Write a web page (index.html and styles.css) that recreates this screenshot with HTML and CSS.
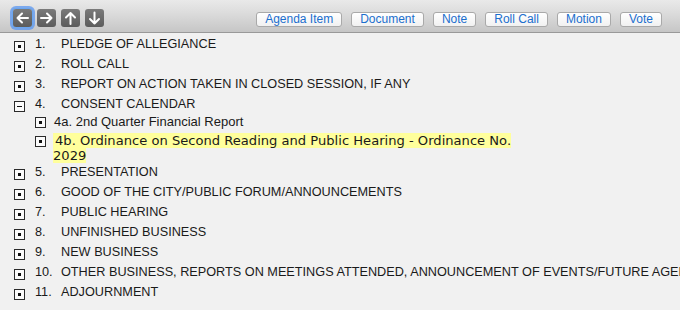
FILE: index.html
```html
<!DOCTYPE html>
<html>
<head>
<meta charset="utf-8">
<link rel="stylesheet" href="styles.css">
</head>
<body>
<div class="toolbar">
  <div class="nav">
    <button class="nav-btn focused" title="Back"><svg width="19" height="18" viewBox="0 0 19 18"><path d="M15 9H4.5M9 4.5L4.5 9L9 13.5" fill="none" stroke="#fff" stroke-width="2" stroke-linecap="round" stroke-linejoin="round"/></svg></button>
    <button class="nav-btn" title="Forward"><svg width="19" height="18" viewBox="0 0 19 18"><path d="M4 9H14.5M10 4.5L14.5 9L10 13.5" fill="none" stroke="#fff" stroke-width="2" stroke-linecap="round" stroke-linejoin="round"/></svg></button>
    <button class="nav-btn" title="Up"><svg width="19" height="18" viewBox="0 0 19 18"><path d="M9.5 15V4M5 8.5L9.5 4L14 8.5" fill="none" stroke="#fff" stroke-width="2" stroke-linecap="round" stroke-linejoin="round"/></svg></button>
    <button class="nav-btn" title="Down"><svg width="19" height="18" viewBox="0 0 19 18"><path d="M9.5 3.5V14.5M5 10L9.5 14.5L14 10" fill="none" stroke="#fff" stroke-width="2" stroke-linecap="round" stroke-linejoin="round"/></svg></button>
  </div>
  <div class="actions">
    <button class="act">Agenda Item</button>
    <button class="act">Document</button>
    <button class="act">Note</button>
    <button class="act">Roll Call</button>
    <button class="act">Motion</button>
    <button class="act">Vote</button>
  </div>
</div>
<ul class="tree">
  <li class="item"><div class="row"><span class="box plus"></span><span class="num">1.</span><span class="title">PLEDGE OF ALLEGIANCE</span></div></li>
  <li class="item"><div class="row"><span class="box plus"></span><span class="num">2.</span><span class="title">ROLL CALL</span></div></li>
  <li class="item"><div class="row"><span class="box plus"></span><span class="num">3.</span><span class="title">REPORT ON ACTION TAKEN IN CLOSED SESSION, IF ANY</span></div></li>
  <li class="item"><div class="row"><span class="box minus"></span><span class="num">4.</span><span class="title">CONSENT CALENDAR</span></div>
    <ul class="sub">
      <li class="subrow"><span class="box plus"></span><span class="subtitle">4a. 2nd Quarter Financial Report</span></li>
      <li class="subrow selected"><span class="box plus"></span><span class="subtitle mark"><span class="hl">4b. Ordinance on Second Reading and Public Hearing - Ordinance No. 2029</span></span></li>
    </ul>
  </li>
  <li class="item"><div class="row"><span class="box plus"></span><span class="num">5.</span><span class="title">PRESENTATION</span></div></li>
  <li class="item"><div class="row"><span class="box plus"></span><span class="num">6.</span><span class="title">GOOD OF THE CITY/PUBLIC FORUM/ANNOUNCEMENTS</span></div></li>
  <li class="item"><div class="row"><span class="box plus"></span><span class="num">7.</span><span class="title">PUBLIC HEARING</span></div></li>
  <li class="item"><div class="row"><span class="box plus"></span><span class="num">8.</span><span class="title">UNFINISHED BUSINESS</span></div></li>
  <li class="item"><div class="row"><span class="box plus"></span><span class="num">9.</span><span class="title">NEW BUSINESS</span></div></li>
  <li class="item"><div class="row"><span class="box plus"></span><span class="num">10.</span><span class="title">OTHER BUSINESS, REPORTS ON MEETINGS ATTENDED, ANNOUNCEMENT OF EVENTS/FUTURE AGENDA ITEMS</span></div></li>
  <li class="item"><div class="row"><span class="box plus"></span><span class="num">11.</span><span class="title">ADJOURNMENT</span></div></li>
</ul>
</body>
</html>
```

FILE: styles.css
```css
html, body {
  margin: 0;
  padding: 0;
  overflow: hidden;
  background: #f1f1f1;
  font-family: "Liberation Sans", Arial, sans-serif;
  color: #1a1a1a;
}

.toolbar {
  box-sizing: border-box;
  height: 33px;
  display: flex;
  justify-content: space-between;
  align-items: flex-start;
  padding: 9px 18px 0 13px;
  background: linear-gradient(#e9e9e9, #dcdcdc 40%, #c6c6c6);
  border-bottom: 1px solid #999;
}

.nav {
  display: flex;
  gap: 5px;
}

.nav-btn {
  width: 19px;
  height: 18px;
  padding: 0;
  border: none;
  border-radius: 3px;
  background: linear-gradient(#7a7a7a, #5c5c5c);
  display: flex;
  align-items: center;
  justify-content: center;
}

.nav-btn.focused {
  box-shadow: 0 0 0 1px #6aa6f0, 0 0 0 3px rgba(90, 150, 240, 0.75);
}

.actions {
  display: flex;
  gap: 9px;
  margin-top: 3px;
}

.act {
  box-sizing: border-box;
  height: 15px;
  padding: 0 8px;
  border: 1px solid #a9a9a9;
  border-radius: 3px;
  background: linear-gradient(#ffffff, #f1f1f1);
  font-family: "Liberation Sans", Arial, sans-serif;
  font-size: 12px;
  line-height: 13px;
  color: #1b6fce;
}

.tree {
  list-style: none;
  margin: 0;
  padding: 1px 0 0 0;
}

.row {
  display: flex;
  align-items: flex-start;
  height: 20px;
  padding-left: 14px;
  font-size: 12.7px;
  line-height: 20px;
  white-space: nowrap;
  overflow: hidden;
}

.box {
  box-sizing: border-box;
  flex: none;
  width: 11px;
  height: 11px;
  border: 1px solid #2a2a2a;
  background: #fbfbfb;
  position: relative;
}

.row .box {
  margin-top: 7px;
  margin-right: 10px;
}

.box.plus::after {
  content: "";
  position: absolute;
  left: 3px;
  top: 3px;
  width: 3px;
  height: 3px;
  background: #111;
}

.box.minus::after {
  content: "";
  position: absolute;
  left: 2px;
  top: 4px;
  width: 5px;
  height: 1px;
  background: #111;
}

.num {
  width: 26px;
  flex: none;
}

.sub {
  list-style: none;
  margin: 0;
  padding: 0 0 0 35px;
}

.subrow {
  display: flex;
  align-items: flex-start;
  font-size: 13px;
  line-height: 15px;
}

.subrow .box {
  margin-top: 3px;
  margin-right: 8px;
}

.subrow.selected {
  margin-top: 4px;
  margin-bottom: -1px;
}

.subtitle.mark {
  width: 468px;
  margin-left: -1px;
  font-family: "DejaVu Sans", Verdana, sans-serif;
  font-size: 13.1px;
  line-height: 15px;
}

.hl {
  background: #ffff9c;
  padding-left: 2px;
}
```
